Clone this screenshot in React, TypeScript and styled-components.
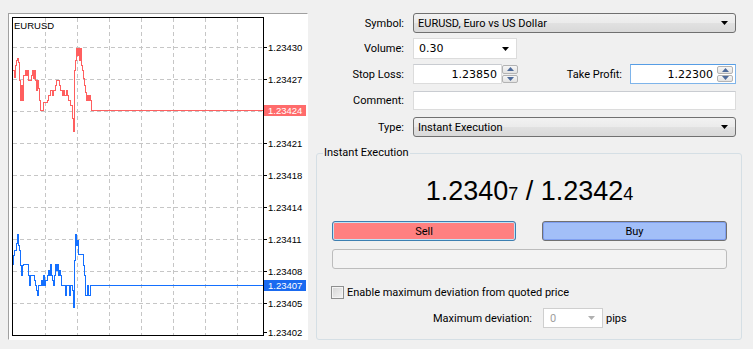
import React from "react";
import styled, { createGlobalStyle } from "styled-components";

const GlobalStyle = createGlobalStyle`
  html, body { margin: 0; padding: 0; background: #f0f0f0; }
  body { font-family: Roboto, "Liberation Sans", sans-serif; font-size: 11px; color: #000; }
  * { box-sizing: border-box; }
`;

const Window = styled.div`
  width: 753px;
  height: 349px;
  display: flex;
  align-items: flex-start;
  padding: 13px 0 0 8px;
  overflow: hidden;
  background: #f0f0f0;
`;

const ChartFrame = styled.div`
  width: 300px;
  height: 327px;
  flex-shrink: 0;
  background: #fff;
  border: 1px solid;
  border-color: #a0a0a0 #ffffff #ffffff #a0a0a0;
  svg { display: block; }
`;

const Form = styled.div`
  display: flex;
  flex-direction: column;
  padding-left: 2px;
  width: 445px;
`;

const Row = styled.div<{ $mt: number; $h: number }>`
  display: flex;
  align-items: center;
  height: ${(p) => p.$h}px;
  margin-top: ${(p) => p.$mt}px;
`;

const Label = styled.div<{ $w: number; $gap: number }>`
  width: ${(p) => p.$w}px;
  margin-right: ${(p) => p.$gap}px;
  text-align: right;
  flex-shrink: 0;
  white-space: nowrap;
`;

const DropList = styled.div<{ $w: number }>`
  width: ${(p) => p.$w}px;
  height: 100%;
  display: flex;
  align-items: center;
  justify-content: space-between;
  padding: 0 7px 0 4px;
  border: 1px solid #707070;
  border-radius: 3px;
  background: linear-gradient(#f2f2f2 0%, #ebebeb 50%, #e1e1e1 51%, #d9d9d9 100%);
`;

const ComboBox = styled.div<{ $w: number; $disabled?: boolean }>`
  width: ${(p) => p.$w}px;
  height: 100%;
  display: flex;
  align-items: center;
  justify-content: space-between;
  padding: 0 7px 0 ${(p) => (p.$disabled ? 6 : 5)}px;
  background: #fff;
  border: 1px solid ${(p) => (p.$disabled ? "#cfcfcf" : "#dcdcdc")};
  color: ${(p) => (p.$disabled ? "#a0a0a0" : "#000")};
  font-family: ${(p) => (p.$disabled ? "Roboto" : "\"DejaVu Sans\"")}, sans-serif;
  font-size: 11px;
`;

const TextBox = styled.div<{ $w: number; $focus?: boolean }>`
  width: ${(p) => p.$w}px;
  height: 100%;
  display: flex;
  align-items: center;
  justify-content: flex-end;
  padding: 0 ${(p) => (p.$focus ? 22 : 4)}px 0 4px;
  background: #fff;
  border: 1px solid ${(p) => (p.$focus ? "#7eb4ea" : "#dcdcdc")};
  border-top-color: ${(p) => (p.$focus ? "#569de5" : "#c9ccd1")};
  font-family: "DejaVu Sans", sans-serif;
  font-size: 11px;
  position: relative;
`;

const SpinWrap = styled.div`
  display: flex;
  height: 100%;
`;

const Spinner = styled.div<{ $inside?: boolean }>`
  width: 16px;
  display: flex;
  flex-direction: column;
  gap: 1px;
  padding: 1px 0;
  ${(p) => (p.$inside ? "position: absolute; right: 2px; top: 0; bottom: 0;" : "")}
`;

const SpinBtn = styled.div`
  flex: 1;
  display: flex;
  align-items: center;
  justify-content: center;
  border: 1px solid #b3b3b3;
  border-radius: 2px;
  background: linear-gradient(#f6f6f6, #e2e2e2);
`;

const Group = styled.fieldset`
  margin: 9px 0 0 6px;
  width: 426px;
  height: 194px;
  padding: 0;
  border: 1px solid #d5dfe5;
  border-radius: 3px;
  min-width: 0;
`;

const Legend = styled.legend`
  margin-left: 6px;
  padding: 0 1px;
  line-height: 14px;
  font-size: 11px;
`;

const GroupBody = styled.div`
  display: flex;
  flex-direction: column;
  padding: 0 14px 0 15px;
`;

const Quote = styled.div`
  margin-top: 16px;
  height: 30px;
  line-height: 30px;
  text-align: center;
  font-family: "Liberation Sans", Arial, sans-serif;
  font-size: 27px;
  color: #000;
`;

const QuoteTail = styled.span`
  font-size: 18px;
`;

const Buttons = styled.div`
  margin-top: 15px;
  display: grid;
  grid-template-columns: 184px 185px;
  justify-content: space-between;
`;

const TradeButton = styled.button<{ $kind: "sell" | "buy" }>`
  height: 20px;
  margin: 0;
  padding: 0;
  border: 1px solid ${(p) => (p.$kind === "sell" ? "#3c7fb1" : "#707070")};
  border-radius: 3px;
  background: ${(p) => (p.$kind === "sell" ? "#ff8080" : "#a2bff8")};
  box-shadow: inset 0 0 0 1px ${(p) => (p.$kind === "sell" ? "#bfe3f6" : "#7f9ff0")};
  font-family: Roboto, sans-serif;
  font-size: 11px;
  color: #000;
`;

const Progress = styled.div`
  margin-top: 8px;
  height: 20px;
  border: 1px solid #bcbcbc;
  border-radius: 3px;
  background: #f3f3f3;
`;

const CheckRow = styled.div`
  margin-top: 17px;
  height: 13px;
  display: flex;
  align-items: center;
  margin-left: -1px;
`;

const CheckBox = styled.div`
  width: 13px;
  height: 13px;
  border: 1px solid #8e8f8f;
  background: linear-gradient(135deg, #d5d5d5, #f4f4f4);
  box-shadow: inset 0 0 0 1px #f4f4f4;
  margin-right: 3px;
`;

const DevRow = styled.div`
  margin-top: 9px;
  height: 20px;
  display: flex;
  align-items: center;
`;

const Suffix = styled.span`
  margin-left: 3px;
`;

const Arrow = ({ color = "#000" }: { color?: string }) => (
  <svg width="7" height="4" viewBox="0 0 7 4">
    <path d="M0 0H7L3.5 4Z" fill={color} />
  </svg>
);

const SpinArrow = ({ up }: { up?: boolean }) => (
  <svg width="7" height="4" viewBox="0 0 7 4">
    <path d={up ? "M0 4H7L3.5 0Z" : "M0 0H7L3.5 4Z"} fill="#4d6a9a" />
  </svg>
);

const redData: [number, number][] = [
  [12, 70], [14, 77], [15, 65], [16, 60], [17, 58], [18, 62], [19, 80], [20, 100], [21, 85], [22, 100],
  [23, 75], [25, 70], [26, 75], [27, 70], [28, 80], [30, 80], [31, 75], [32, 70], [33, 78], [34, 70],
  [35, 80], [36, 90], [37, 80], [38, 88], [39, 100], [40, 110], [42, 110], [43, 102], [47, 100], [48, 95],
  [50, 90], [52, 95], [53, 90], [55, 85], [56, 80], [58, 80], [59, 85], [60, 90], [62, 95], [63, 90],
  [64, 95], [66, 90], [67, 95], [68, 100], [70, 105], [72, 118], [73, 131], [74, 70], [75, 60], [76, 48],
  [77, 55], [78, 48], [79, 60], [80, 48], [81, 65], [82, 70], [83, 78], [84, 85], [85, 92], [86, 100],
  [87, 95], [88, 100], [89, 95], [90, 100], [91, 110.5], [263, 110.5],
];

const blueData: [number, number][] = [
  [12, 264], [13, 255], [14, 250], [16, 243], [17, 234], [18, 245], [19, 250], [20, 265], [21, 275], [22, 265],
  [23, 264], [27, 264], [28, 275], [29, 285], [30, 275], [33, 275], [34, 280], [35, 285], [36, 290], [37, 295],
  [38, 285], [40, 285], [41, 280], [42, 285], [43, 275], [44, 285], [45, 280], [47, 275], [48, 270], [49, 275],
  [50, 264], [51, 275], [52, 280], [53, 285], [54, 275], [55, 264], [56, 270], [57, 264], [58, 275], [59, 270],
  [60, 275], [61, 285], [64, 285], [65, 295], [66, 285], [68, 285], [69, 295], [70, 285],
  [72, 290], [73, 307], [74, 260], [75, 234], [76, 245], [77, 240], [78, 254], [82, 254],
  [83, 265], [84, 275], [85, 295], [87, 285], [88, 295], [90, 285.5],
  [263, 285.5],
];

const stepPath = (pts: [number, number][]) =>
  pts.reduce((d, [x, y], i) => (i === 0 ? `M${x + 0.5} ${y}` : `${d}H${x + 0.5}V${y}`), "");

const gridY = [47.5, 79.5, 111.5, 143.5, 175.5, 207.5, 239.5, 271.5, 303.5];
const gridX = [45.5, 77.5, 109.5, 141.5, 173.5, 205.5, 237.5];

const scale: { y: number; v: string }[] = [
  { y: 47.5, v: "1.23430" },
  { y: 79.5, v: "1.23427" },
  { y: 143.5, v: "1.23421" },
  { y: 175.5, v: "1.23418" },
  { y: 207.5, v: "1.23414" },
  { y: 239.5, v: "1.23411" },
  { y: 271.5, v: "1.23408" },
  { y: 303.5, v: "1.23405" },
  { y: 332.5, v: "1.23402" },
];

const Chart = () => (
  <svg width="298" height="325" viewBox="9 14 298 325" fontFamily="'Liberation Sans', Arial, sans-serif">
    <g stroke="#c6c6c6" strokeDasharray="4 3" shapeRendering="crispEdges">
      {gridY.map((y) => (
        <line key={"h" + y} x1="13" x2="263" y1={y} y2={y} />
      ))}
      {gridX.map((x) => (
        <line key={"v" + x} x1={x} x2={x} y1="18" y2="335" />
      ))}
    </g>
    <path d={stepPath(redData)} fill="none" stroke="#ff5f5f" strokeWidth="1" shapeRendering="crispEdges" />
    <path d={stepPath(blueData)} fill="none" stroke="#1470ff" strokeWidth="1" shapeRendering="crispEdges" />
    <path d="M12.5 17.5H263.5V335.5H12.5Z" fill="none" stroke="#000" shapeRendering="crispEdges" />
    <g stroke="#000" shapeRendering="crispEdges">
      {scale.map((s) => (
        <line key={"t" + s.v} x1="263" x2="267" y1={s.y} y2={s.y} />
      ))}
    </g>
    {scale.map((s) => (
      <text key={s.v} x="268" y={s.y + 3.5} fontSize="9.5" fill="#000">
        {s.v}
      </text>
    ))}
    <rect x="264" y="105" width="42" height="11" fill="#ff6b6b" />
    <text x="268" y="114" fontSize="9.5" fill="#fff">1.23424</text>
    <rect x="264" y="280" width="42" height="11" fill="#1a6af0" />
    <text x="268" y="289" fontSize="9.5" fill="#fff">1.23407</text>
    <text x="14" y="28.5" fontSize="9.5" fill="#000">EURUSD</text>
  </svg>
);

export default function App() {
  return (
    <>
      <GlobalStyle />
      <Window>
        <ChartFrame>
          <Chart />
        </ChartFrame>
        <Form>
          <Row $mt={0} $h={20}>
            <Label $w={94} $gap={9}>Symbol:</Label>
            <DropList $w={323}>
              <span>EURUSD, Euro vs US Dollar</span>
              <Arrow />
            </DropList>
          </Row>
          <Row $mt={5} $h={21}>
            <Label $w={94} $gap={9}>Volume:</Label>
            <ComboBox $w={104}>
              <span>0.30</span>
              <Arrow />
            </ComboBox>
          </Row>
          <Row $mt={5} $h={20}>
            <Label $w={94} $gap={9}>Stop Loss:</Label>
            <SpinWrap>
              <TextBox $w={89}>1.23850</TextBox>
              <Spinner>
                <SpinBtn><SpinArrow up /></SpinBtn>
                <SpinBtn><SpinArrow /></SpinBtn>
              </Spinner>
            </SpinWrap>
            <Label $w={104} $gap={8}>Take Profit:</Label>
            <TextBox $w={106} $focus>
              1.22300
              <Spinner $inside>
                <SpinBtn><SpinArrow up /></SpinBtn>
                <SpinBtn><SpinArrow /></SpinBtn>
              </Spinner>
            </TextBox>
          </Row>
          <Row $mt={7} $h={19}>
            <Label $w={94} $gap={9}>Comment:</Label>
            <TextBox $w={323} />
          </Row>
          <Row $mt={7} $h={20}>
            <Label $w={94} $gap={9}>Type:</Label>
            <DropList $w={323}>
              <span>Instant Execution</span>
              <Arrow />
            </DropList>
          </Row>
          <Group>
            <Legend>Instant Execution</Legend>
            <GroupBody>
              <Quote>
                1.2340<QuoteTail>7</QuoteTail> / 1.2342<QuoteTail>4</QuoteTail>
              </Quote>
              <Buttons>
                <TradeButton $kind="sell">Sell</TradeButton>
                <TradeButton $kind="buy">Buy</TradeButton>
              </Buttons>
              <Progress />
              <CheckRow>
                <CheckBox />
                <span>Enable maximum deviation from quoted price</span>
              </CheckRow>
              <DevRow>
                <Label $w={200} $gap={11}>Maximum deviation:</Label>
                <ComboBox $w={60} $disabled>
                  <span>0</span>
                  <Arrow color="#b0b0b0" />
                </ComboBox>
                <Suffix>pips</Suffix>
              </DevRow>
            </GroupBody>
          </Group>
        </Form>
      </Window>
    </>
  );
}
